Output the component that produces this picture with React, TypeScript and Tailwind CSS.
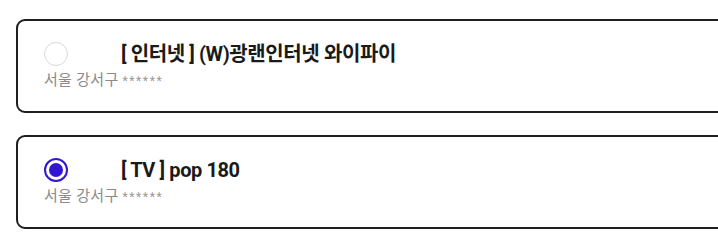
import { useState } from 'react';

const items = [
  { id: 'internet', tag: '인터넷', name: '(W)광랜인터넷 와이파이', area: '서울 강서구', code: '******' },
  { id: 'tv', tag: 'TV', name: 'pop 180', area: '서울 강서구', code: '******' },
];

export default function App() {
  const [selected, setSelected] = useState('tv');

  return (
    <div className="w-[718px] h-[250px] overflow-hidden bg-white pt-[19px] pl-4 font-['Roboto','Noto_Sans_CJK_KR',sans-serif]">
      <div className="flex flex-col gap-[22px] w-[740px]">
        {items.map((item) => {
          const checked = selected === item.id;
          return (
            <label
              key={item.id}
              onClick={() => setSelected(item.id)}
              className="block h-[94px] rounded-[9px] border-2 border-[#1e1e1e] pl-[26px] pt-[21px] cursor-pointer"
            >
              <div className="flex items-center h-6">
                <span
                  className={`flex items-center justify-center w-6 h-6 rounded-full ${
                    checked ? 'border-2 border-[#3216d4]' : 'border-[1.5px] border-[#d8d8d8]'
                  }`}
                >
                  {checked && <span className="w-[14px] h-[14px] rounded-full bg-[#3216d4]" />}
                </span>
                <span className="ml-[53px] text-[20px] leading-6 font-bold text-[#1a1a1a] tracking-[-0.4px]">
                  [ {item.tag} ] {item.name}
                </span>
              </div>
              <div className="mt-[5px] text-[15px] leading-[18px] text-[#8a8a8a] tracking-[0.3px]">
                {item.area} <span className="text-[12px] tracking-[1.6px] text-[#999]">{item.code}</span>
              </div>
            </label>
          );
        })}
      </div>
    </div>
  );
}
